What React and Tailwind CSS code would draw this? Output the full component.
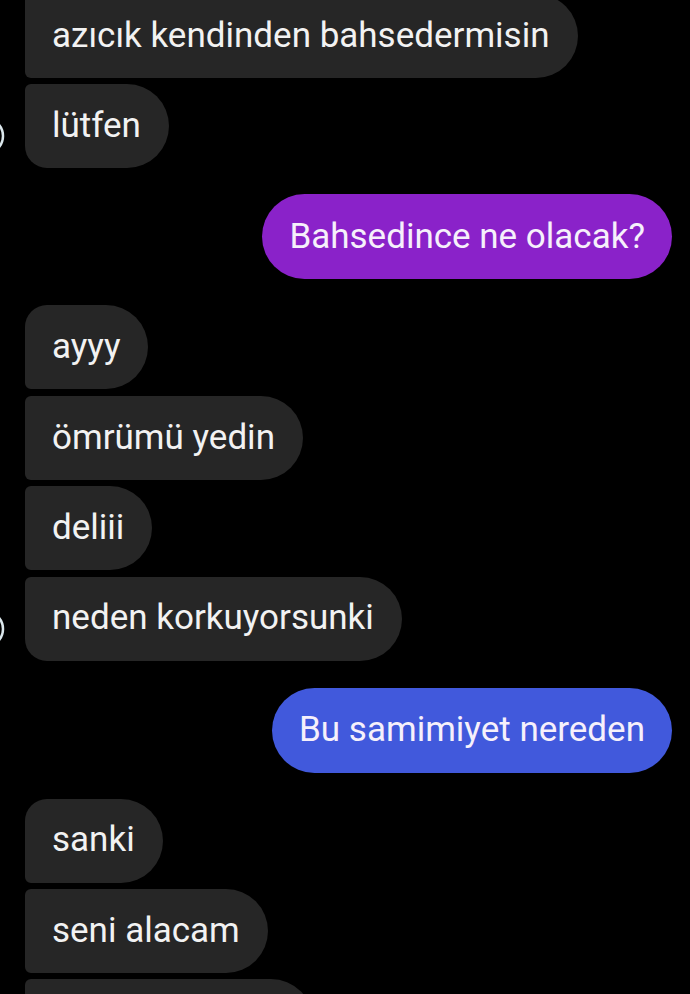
const font = { fontFamily: 'Roboto, "Noto Sans", sans-serif' };

const groups = [
  { side: 'in', msgs: ['azıcık kendinden bahsedermisin', 'lütfen'], avatar: true, cutTop: true },
  { side: 'out', color: 'bg-[#8a22c9]', msgs: ['Bahsedince ne olacak?'] },
  { side: 'in', msgs: ['ayyy', 'ömrümü yedin', 'deliii', 'neden korkuyorsunki'], avatar: true },
  { side: 'out', color: 'bg-[#4159dc]', msgs: ['Bu samimiyet nereden'], nudge: true },
  { side: 'in', msgs: ['sanki', 'seni alacam', ''], avatar: false, cutBottom: true },
];

function Avatar() {
  return (
    <svg width="25" height="84" viewBox="0 0 25 84" className="shrink-0">
      <circle cx="-15" cy="52" r="18" fill="none" stroke="#dbe7ec" strokeWidth="2.5" />
    </svg>
  );
}

function InBubble({ text, first, last, showAvatar }) {
  const corners = [
    first ? 'rounded-tl-[22px]' : 'rounded-tl-[6px]',
    last ? 'rounded-bl-[22px]' : 'rounded-bl-[6px]',
  ].join(' ');
  return (
    <div className="flex h-[84px] items-stretch">
      {showAvatar ? <Avatar /> : <div className="w-[25px] shrink-0" />}
      <div
        className={`flex items-center rounded-r-[42px] bg-[#262626] pl-[27px] pr-[28px] text-[35px] text-[#f2f2f2] ${corners} ${text ? '' : 'w-[288px]'}`}
      >
        {text}
      </div>
    </div>
  );
}

export default function App() {
  return (
    <div className="h-[994px] w-[690px] overflow-hidden bg-black" style={font}>
      <div className="-mt-[6px] flex flex-col gap-[26px]">
        {groups.map((g, gi) =>
          g.side === 'in' ? (
            <div key={gi} className="flex flex-col gap-[6.4px]">
              {g.msgs.map((m, i) => (
                <InBubble
                  key={i}
                  text={m}
                  first={i === 0 && !g.cutTop}
                  last={i === g.msgs.length - 1 && !g.cutBottom}
                  showAvatar={g.avatar && i === g.msgs.length - 1}
                />
              ))}
            </div>
          ) : (
            <div key={gi} className={`flex justify-end pr-[18px] ${g.nudge ? 'pt-[1px]' : ''}`}>
              <div
                className={`flex h-[85px] items-center rounded-full px-[27px] text-[35px] text-[#f6f0fb] ${g.color}`}
              >
                {g.msgs[0]}
              </div>
            </div>
          )
        )}
      </div>
    </div>
  );
}
